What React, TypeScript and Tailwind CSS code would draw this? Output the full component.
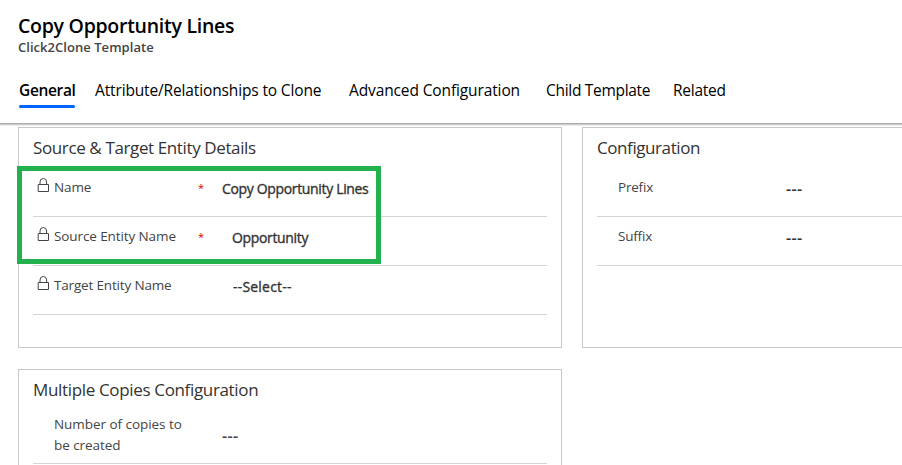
import type { ReactNode } from "react";

function LockIcon() {
  return (
    <svg width="12" height="15" viewBox="0 0 12 15" fill="none" stroke="#46424c" className="block shrink-0">
      <path d="M1.2 6.5h10.3v7H1.2z" />
      <path d="M3 6.5V4a3.3 3.5 0 0 1 6.6 0v2.5" />
    </svg>
  );
}

function Tab({ className, children }: { className: string; children: ReactNode }) {
  return <div className={`h-7 shrink-0 whitespace-nowrap leading-7 text-black ${className}`}>{children}</div>;
}

function Heading({ className, children }: { className: string; children: ReactNode }) {
  return <h2 className={`h-10 whitespace-nowrap pt-1.5 text-[17px] leading-7 text-[#333] ${className}`}>{children}</h2>;
}

type RowProps = {
  label: string;
  labelClass: string;
  value: string;
  valueClass: string;
  locked?: boolean;
  required?: boolean;
};

function Row({ label, labelClass, value, valueClass, locked, required }: RowProps) {
  return (
    <div className="flex h-[49px] border-b border-[#d4d4d4]">
      <div className="w-[21px] shrink-0 pl-1 pt-2.5">{locked && <LockIcon />}</div>
      <div className={`w-36 shrink-0 whitespace-nowrap pt-[7px] text-[13.5px] leading-6 text-[#444] ${labelClass}`}>{label}</div>
      <div className="w-6 shrink-0 pt-2 text-[11px] leading-6 text-[#e00000]">{required && "*"}</div>
      <div className={`whitespace-nowrap pt-[9px] leading-6 text-[#333] ${valueClass}`}>{value}</div>
    </div>
  );
}

export default function App() {
  return (
    <div className="relative h-[465px] w-[902px] overflow-hidden bg-white font-['Open_Sans','Noto_Sans',sans-serif]">
      <header className="h-[123px] pl-[18px] pt-3">
        <h1 className="h-7 whitespace-nowrap text-[19.5px] font-semibold leading-7 text-black tracking-[-0.27px]">Copy Opportunity Lines</h1>
        <div className="-mt-[3px] h-5 whitespace-nowrap text-[13px] font-semibold leading-5 text-[#444] tracking-[0.04px]">Click2Clone Template</div>
        <nav className="ml-px mt-[19px] flex">
          <div className="w-[76px] shrink-0">
            <Tab className="text-[15.5px] font-semibold tracking-[-0.35px]">General</Tab>
            <div className="mt-px h-[3px] w-14 rounded-sm bg-[#0066ff]" />
          </div>
          <Tab className="w-[254px] text-[15.5px] tracking-[-0.14px]">Attribute/Relationships to Clone</Tab>
          <Tab className="w-[197px] text-[15.5px] tracking-[-0.12px]">Advanced Configuration</Tab>
          <Tab className="w-[127px] text-[15.5px] tracking-[-0.3px]">Child Template</Tab>
          <Tab className="text-[15.5px] tracking-[-0.25px]">Related</Tab>
        </nav>
      </header>
      <div className="h-px bg-[#ababab]" />
      <div className="h-px bg-[#cdcdcd]" />
      <div className="h-px bg-[#ececec]" />
      <main className="flex gap-5 pl-[18px]">
        <div className="flex w-[544px] shrink-0 flex-col gap-[21px]">
          <section className="mt-px h-[221px] border border-[#c8c8c8] px-3.5">
            <Heading className="tracking-[-0.38px]">Source &amp; Target Entity Details</Heading>
            <Row locked required label="Name" labelClass="tracking-[-0.1px]" value="Copy Opportunity Lines" valueClass="text-sm tracking-[-0.34px] [-webkit-text-stroke:0.35px_#333]" />
            <Row locked required label="Source Entity Name" labelClass="tracking-[-0.1px]" value="Opportunity" valueClass="pl-2.5 text-sm tracking-[-0.34px] [-webkit-text-stroke:0.35px_#333]" />
            <Row locked label="Target Entity Name" labelClass="tracking-[-0.17px]" value="--Select--" valueClass="pl-[11px] text-sm tracking-[0.2px] [-webkit-text-stroke:0.35px_#333]" />
          </section>
          <section className="h-[120px] border border-[#c8c8c8] px-3.5">
            <Heading className="tracking-[-0.34px]">Multiple Copies Configuration</Heading>
            <div className="flex h-[54px] border-b border-[#d4d4d4]">
              <div className="ml-[21px] w-[168px] whitespace-nowrap pt-1 text-[13.5px] leading-[21px] text-[#444] tracking-[-0.05px]">
                Number of copies to
                <br />
                be created
              </div>
              <div className="pt-3.5 text-base font-semibold leading-6 text-[#444] tracking-[0.4px]">---</div>
            </div>
          </section>
        </div>
        <section className="mt-px h-[221px] w-[400px] shrink-0 border border-[#c8c8c8] pl-3.5">
          <Heading className="tracking-[-0.42px]">Configuration</Heading>
          <Row label="Prefix" labelClass="tracking-[-0.2px]" value="---" valueClass="text-base font-semibold tracking-[0.4px]" />
          <Row label="Suffix" labelClass="tracking-[-0.2px]" value="---" valueClass="text-base font-semibold tracking-[0.4px]" />
        </section>
      </main>
      <div className="absolute left-[17px] top-[166px] h-[98px] w-[364px] border-[5px] border-[#22b14c]" />
    </div>
  );
}
